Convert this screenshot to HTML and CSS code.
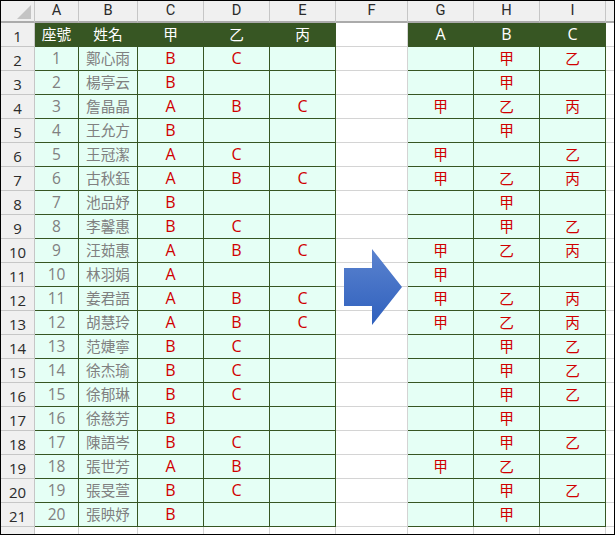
FILE: index.html
```html
<!DOCTYPE html>
<html lang="zh-Hant">
<head>
<meta charset="utf-8">
<title>Sheet</title>
<link rel="stylesheet" href="styles.css">
</head>
<body>
<div class="frame">
<table class="sheet">
<colgroup>
<col class="w-row"><col class="w-a"><col class="w-b"><col class="w-m"><col class="w-m"><col class="w-m"><col class="w-f"><col class="w-m"><col class="w-m"><col class="w-m"><col class="w-rest">
</colgroup>
<tr class="colhead"><th class="corner"><span class="tri"></span></th><th>A</th><th>B</th><th>C</th><th>D</th><th>E</th><th>F</th><th>G</th><th>H</th><th>I</th><th></th></tr>
<tr class="title"><th>1</th><td>座號</td><td>姓名</td><td>甲</td><td>乙</td><td>丙</td><td class="gap"></td><td class="h">A</td><td class="h">B</td><td class="h">C</td><td class="gap"></td></tr>
<tr><th>2</th><td class="n d">1</td><td class="n">鄭心雨</td><td class="g">B</td><td class="g">C</td><td></td><td class="gap"></td><td></td><td>甲</td><td>乙</td><td class="gap"></td></tr>
<tr><th>3</th><td class="n d">2</td><td class="n">楊亭云</td><td class="g">B</td><td></td><td></td><td class="gap"></td><td></td><td>甲</td><td></td><td class="gap"></td></tr>
<tr><th>4</th><td class="n d">3</td><td class="n">詹晶晶</td><td class="g">A</td><td class="g">B</td><td class="g">C</td><td class="gap"></td><td>甲</td><td>乙</td><td>丙</td><td class="gap"></td></tr>
<tr><th>5</th><td class="n d">4</td><td class="n">王允方</td><td class="g">B</td><td></td><td></td><td class="gap"></td><td></td><td>甲</td><td></td><td class="gap"></td></tr>
<tr><th>6</th><td class="n d">5</td><td class="n">王冠潔</td><td class="g">A</td><td class="g">C</td><td></td><td class="gap"></td><td>甲</td><td></td><td>乙</td><td class="gap"></td></tr>
<tr><th>7</th><td class="n d">6</td><td class="n">古秋鈺</td><td class="g">A</td><td class="g">B</td><td class="g">C</td><td class="gap"></td><td>甲</td><td>乙</td><td>丙</td><td class="gap"></td></tr>
<tr><th>8</th><td class="n d">7</td><td class="n">池品妤</td><td class="g">B</td><td></td><td></td><td class="gap"></td><td></td><td>甲</td><td></td><td class="gap"></td></tr>
<tr><th>9</th><td class="n d">8</td><td class="n">李馨惠</td><td class="g">B</td><td class="g">C</td><td></td><td class="gap"></td><td></td><td>甲</td><td>乙</td><td class="gap"></td></tr>
<tr><th>10</th><td class="n d">9</td><td class="n">汪茹惠</td><td class="g">A</td><td class="g">B</td><td class="g">C</td><td class="gap"></td><td>甲</td><td>乙</td><td>丙</td><td class="gap"></td></tr>
<tr><th>11</th><td class="n d">10</td><td class="n">林羽娟</td><td class="g">A</td><td></td><td></td><td class="gap"></td><td>甲</td><td></td><td></td><td class="gap"></td></tr>
<tr><th>12</th><td class="n d">11</td><td class="n">姜君語</td><td class="g">A</td><td class="g">B</td><td class="g">C</td><td class="gap"></td><td>甲</td><td>乙</td><td>丙</td><td class="gap"></td></tr>
<tr><th>13</th><td class="n d">12</td><td class="n">胡慧玲</td><td class="g">A</td><td class="g">B</td><td class="g">C</td><td class="gap"></td><td>甲</td><td>乙</td><td>丙</td><td class="gap"></td></tr>
<tr><th>14</th><td class="n d">13</td><td class="n">范婕寧</td><td class="g">B</td><td class="g">C</td><td></td><td class="gap"></td><td></td><td>甲</td><td>乙</td><td class="gap"></td></tr>
<tr><th>15</th><td class="n d">14</td><td class="n">徐杰瑜</td><td class="g">B</td><td class="g">C</td><td></td><td class="gap"></td><td></td><td>甲</td><td>乙</td><td class="gap"></td></tr>
<tr><th>16</th><td class="n d">15</td><td class="n">徐郁琳</td><td class="g">B</td><td class="g">C</td><td></td><td class="gap"></td><td></td><td>甲</td><td>乙</td><td class="gap"></td></tr>
<tr><th>17</th><td class="n d">16</td><td class="n">徐慈芳</td><td class="g">B</td><td></td><td></td><td class="gap"></td><td></td><td>甲</td><td></td><td class="gap"></td></tr>
<tr><th>18</th><td class="n d">17</td><td class="n">陳語岑</td><td class="g">B</td><td class="g">C</td><td></td><td class="gap"></td><td></td><td>甲</td><td>乙</td><td class="gap"></td></tr>
<tr><th>19</th><td class="n d">18</td><td class="n">張世芳</td><td class="g">A</td><td class="g">B</td><td></td><td class="gap"></td><td>甲</td><td>乙</td><td></td><td class="gap"></td></tr>
<tr><th>20</th><td class="n d">19</td><td class="n">張旻萱</td><td class="g">B</td><td class="g">C</td><td></td><td class="gap"></td><td></td><td>甲</td><td>乙</td><td class="gap"></td></tr>
<tr><th>21</th><td class="n d">20</td><td class="n">張映妤</td><td class="g">B</td><td></td><td></td><td class="gap"></td><td></td><td>甲</td><td></td><td class="gap"></td></tr>
<tr class="tail"><th></th><td class="gap"></td><td class="gap"></td><td class="gap"></td><td class="gap"></td><td class="gap"></td><td class="gap"></td><td class="gap"></td><td class="gap"></td><td class="gap"></td><td class="gap"></td></tr>
</table>
<svg class="arrow" width="60" height="78" viewBox="0 0 60 78">
<defs><linearGradient id="blue" x1="0" y1="0" x2="0" y2="1"><stop offset="0" stop-color="#5b83cf"/><stop offset="1" stop-color="#2f60bd"/></linearGradient></defs>
<polygon points="1,20 29,20 29,1 59,39 29,77 29,58 1,58" fill="url(#blue)"/>
</svg>
</div>
</body>
</html>
```
FILE: styles.css
```css
html, body {
  margin: 0;
  padding: 0;
  background: #000;
}
.frame {
  position: relative;
  width: 613px;
  height: 533px;
  margin: 1px;
  overflow: hidden;
  background: #fff;
}
.sheet {
  border-collapse: separate;
  border-spacing: 0;
  table-layout: fixed;
  width: 630px;
  font-family: "Open Sans", "Noto Sans CJK TC", sans-serif;
  font-size: 14.67px;
}
.w-row { width: 34px; }
.w-a { width: 44px; }
.w-b { width: 59px; }
.w-m { width: 66px; }
.w-f { width: 72px; }
.w-rest { width: 25px; }
.sheet tr { height: 24px; }
.sheet th, .sheet td {
  box-sizing: border-box;
  padding: 0;
  height: 24px;
  line-height: 20px;
  text-align: center;
  font-weight: 400;
}
.sheet th {
  background: #f0f0f0;
  color: #2b2b2b;
  border-right: 1px solid #c6c6c6;
  border-bottom: 1px solid #c6c6c6;
  padding-top: 3px;
  line-height: 18px;
  font-size: 15px;
}
.sheet td {
  background: #e5fff5;
  color: #d00000;
  border-right: 1px solid #375623;
  border-bottom: 1px solid #375623;
  padding-bottom: 2px;
  line-height: 20px;
}
.sheet td.n { color: #808080; }
.sheet td.d { font-size: 15.5px; }
.sheet td.g { font-size: 16px; font-weight: 500; }
.sheet td.h { font-size: 16px; }
.sheet .title td {
  background: #375623;
  color: #fff;
}
.sheet td.gap, .sheet .title td.gap {
  background: #fff;
  border-right: 1px solid #d4d4d4;
  border-bottom: 1px solid #d4d4d4;
}
.sheet .colhead { height: 22px; }
.sheet .colhead th {
  height: 22px;
  padding: 0 0 2px;
  line-height: 16px;
  font-family: Roboto, sans-serif;
  font-size: 14.67px;
  border-bottom: 2px solid #ababab;
}
.corner { position: relative; }
.tri {
  position: absolute;
  right: 3px;
  bottom: 2px;
  width: 0;
  height: 0;
  border-style: solid;
  border-width: 0 0 14px 14px;
  border-color: transparent transparent #c4c4c4 transparent;
}
.arrow {
  position: absolute;
  left: 342px;
  top: 247px;
}
```
